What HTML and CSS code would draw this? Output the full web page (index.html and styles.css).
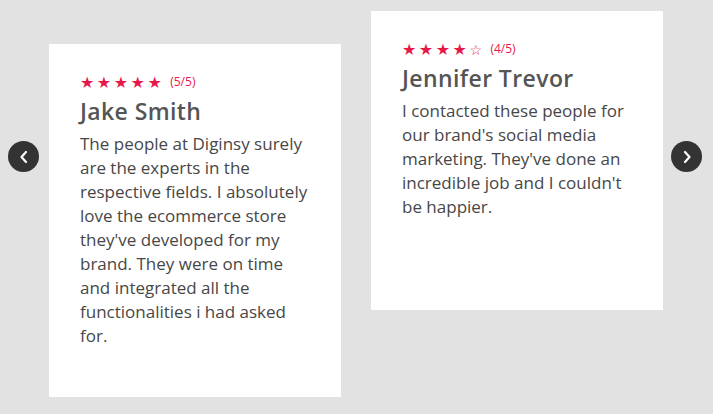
FILE: index.html
```html
<!DOCTYPE html>
<html>
<head>
<meta charset="utf-8">
<link rel="stylesheet" href="styles.css">
</head>
<body>
<div class="slider">
  <button class="nav nav-prev" aria-label="Previous">
    <svg width="12" height="14" viewBox="0 0 12 14"><path d="M8 2 L3.5 7 L8 12" fill="none" stroke="#fff" stroke-width="2.2" stroke-linecap="round" stroke-linejoin="round"/></svg>
  </button>
  <div class="track">
    <div class="card card-a">
      <div class="rating"><span class="stars">★★★★★</span><span class="score">(5/5)</span></div>
      <h3 class="name">Jake Smith</h3>
      <p class="text">The people at Diginsy surely are the experts in the respective fields. I absolutely love the ecommerce store they've developed for my brand. They were on time and integrated all the functionalities i had asked for.</p>
    </div>
    <div class="card card-b">
      <div class="rating"><span class="stars">★★★★<span class="empty">☆</span></span><span class="score">(4/5)</span></div>
      <h3 class="name">Jennifer Trevor</h3>
      <p class="text">I contacted these people for our brand's social media marketing. They've done an incredible job and I couldn't be happier.</p>
    </div>
  </div>
  <button class="nav nav-next" aria-label="Next">
    <svg width="12" height="14" viewBox="0 0 12 14"><path d="M4 2 L8.5 7 L4 12" fill="none" stroke="#fff" stroke-width="2.2" stroke-linecap="round" stroke-linejoin="round"/></svg>
  </button>
</div>
</body>
</html>
```
FILE: styles.css
```css
html, body {
  margin: 0;
  padding: 0;
  background: #e2e2e2;
  width: 713px;
  height: 414px;
  overflow: hidden;
  font-family: "Open Sans", "DejaVu Sans", sans-serif;
}
.slider {
  position: relative;
  height: 414px;
}
.track {
  display: flex;
  gap: 30px;
  padding-left: 49px;
  align-items: flex-start;
}
.card {
  background: #fff;
  width: 292px;
  box-sizing: border-box;
  padding: 30px 31px 0 31px;
}
.card-a { margin-top: 44px; height: 353px; }
.card-b { margin-top: 11px; height: 299px; }
.rating {
  display: flex;
  align-items: center;
  gap: 6px;
  height: 16px;
  color: #e8174a;
}
.stars {
  font-size: 16px;
  letter-spacing: 2.5px;
  line-height: 16px;
}
.empty { font-size: 14px; }
.score {
  font-size: 12px;
  line-height: 16px;
}
.name {
  margin: 6px 0 0 0;
  font-size: 23px;
  line-height: 30px;
  font-weight: 600;
  letter-spacing: 0.4px;
  color: #555;
}
.text {
  margin: 6px 0 0 0;
  font-size: 17px;
  line-height: 24px;
  color: #474747;
}
.nav {
  position: absolute;
  top: 141px;
  width: 31px;
  height: 31px;
  border-radius: 50%;
  border: none;
  background: #333;
  padding: 0;
  display: flex;
  align-items: center;
  justify-content: center;
}
.nav-prev { left: 8px; }
.nav-next { left: 671px; }
```
